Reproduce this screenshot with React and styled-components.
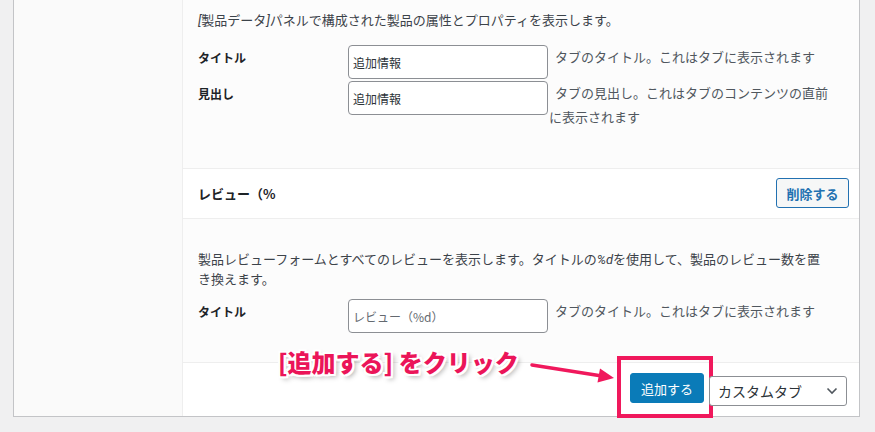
import React from "react";
import styled, { createGlobalStyle } from "styled-components";

const GlobalStyle = createGlobalStyle`
  html, body { margin: 0; padding: 0; }
  body {
    background: #f0f0f1;
    font-family: "Noto Sans CJK JP", "Noto Sans", sans-serif;
    color: #3c434a;
    -webkit-font-smoothing: antialiased;
  }
  * { box-sizing: border-box; }
`;

const Page = styled.div`
  width: 875px;
  height: 432px;
  overflow: hidden;
  padding-left: 13px;
`;

const Panel = styled.div`
  display: flex;
  width: 847px;
  border: 1px solid #c3c4c7;
  border-top: none;
  background: #fff;
`;

const Sidebar = styled.div`
  width: 169px;
  flex: none;
  background: #fafafa;
  border-right: 1px solid #eeeeee;
`;

const Main = styled.div`
  flex: 1;
  display: flex;
  flex-direction: column;
  min-width: 0;
`;

const Section = styled.div`
  background: #fcfcfc;
  border-bottom: 1px solid #eeeeee;
  padding: ${(p) => p.$pad} 27px ${(p) => p.$padBottom} 15px;
  height: ${(p) => p.$h}px;
`;

const Desc = styled.p`
  margin: 0 0 ${(p) => p.$mb}px;
  font-size: 13px;
  line-height: ${(p) => p.$lh}px;
  color: #3c434a;
`;

const Em = styled.em`
  font-style: italic;
  font-family: Roboto, "Noto Sans CJK JP", sans-serif;
  font-synthesis: none;
`;

const Row = styled.div`
  display: grid;
  grid-template-columns: 150px 1fr;
  align-items: start;
  margin-bottom: ${(p) => p.$mb || 0}px;
`;

const Label = styled.div`
  font-size: 12px;
  font-weight: 700;
  color: #1d2327;
  line-height: 20px;
  padding-top: 3px;
`;

const Field = styled.div`
  display: flex;
  align-items: flex-start;
`;

const TextInput = styled.input`
  width: 200px;
  height: 34px;
  flex: none;
  border: 1px solid #8c8f94;
  border-radius: 4px;
  background: #fff;
  padding: 0 4px;
  font-family: inherit;
  font-size: 12px;
  color: #2c3338;
  outline: none;
  &::placeholder { color: #646970; }
`;

const Help = styled.div`
  margin-left: 1px;
  font-size: 13px;
  line-height: 24px;
  text-indent: 6px;
  color: #50575e;
`;

const Header = styled.div`
  height: 50px;
  display: flex;
  align-items: center;
  justify-content: space-between;
  padding: 0 10px 1px 15px;
  background: #fff;
  border-bottom: 1px solid #eeeeee;
`;

const HeaderTitle = styled.h3`
  margin: 0;
  font-size: 13px;
  font-weight: 700;
  color: #1d2327;
`;

const SecondaryButton = styled.button`
  height: 30px;
  width: 73px;
  padding: 0;
  border: 1px solid #2271b1;
  border-radius: 3px;
  background: #f6f7f7;
  color: #2271b1;
  font-family: inherit;
  font-size: 13px;
  font-weight: 700;
  cursor: pointer;
`;

const Toolbar = styled.div`
  position: relative;
  height: 53px;
  display: flex;
  justify-content: flex-end;
  align-items: flex-start;
  gap: 5px;
  padding: 10px 12px 0 15px;
  background: #fff;
`;

const ButtonWrap = styled.span`
  position: relative;
  display: inline-flex;
`;

const PrimaryButton = styled.button`
  height: 30px;
  width: 74px;
  padding: 0;
  border: 1px solid #0a7bb8;
  border-radius: 3px;
  background: #0a7bb8;
  color: #fff;
  font-family: inherit;
  font-size: 13px;
  cursor: pointer;
`;

const Highlight = styled.span`
  position: absolute;
  left: -13px;
  top: -17px;
  width: 96px;
  height: 62px;
  border: 4px solid #f0185c;
  pointer-events: none;
`;

const SelectWrap = styled.span`
  position: relative;
  margin-top: 3px;
  display: inline-flex;
`;

const Select = styled.select`
  appearance: none;
  width: 138px;
  height: 30px;
  border: 1px solid #8c8f94;
  border-radius: 3px;
  background: #fff;
  padding: 0 24px 0 8px;
  font-family: inherit;
  font-size: 14px;
  color: #2c3338;
`;

const Chevron = styled.svg`
  position: absolute;
  right: 9px;
  top: 11px;
  pointer-events: none;
`;

const Callout = styled.div`
  position: absolute;
  left: 95px;
  top: -14px;
  font-size: 24px;
  line-height: 26px;
  font-weight: 900;
  color: #eb1559;
  white-space: nowrap;
  text-shadow:
    2px 0 0 #fff, -2px 0 0 #fff, 0 2px 0 #fff, 0 -2px 0 #fff,
    2px 2px 0 #fff, -2px -2px 0 #fff, 2px -2px 0 #fff, -2px 2px 0 #fff,
    3px 3px 5px rgba(0, 0, 0, 0.35);
`;

const Arrow = styled.svg`
  position: absolute;
  left: 345px;
  top: -4px;
  overflow: visible;
`;

export default function App() {
  return (
    <>
      <GlobalStyle />
      <Page>
        <Panel>
          <Sidebar />
          <Main>
            <Section $pad="10px" $padBottom="0" $h={169}>
              <Desc $lh={20} $mb={14}>
                <Em>[</Em>製品データ<Em>]</Em>パネルで構成された製品の属性とプロパティを表示します。
              </Desc>
              <Row $mb={2}>
                <Label>タイトル</Label>
                <Field>
                  <TextInput defaultValue="追加情報" />
                  <Help>タブのタイトル。これはタブに表示されます</Help>
                </Field>
              </Row>
              <Row>
                <Label>見出し</Label>
                <Field>
                  <TextInput defaultValue="追加情報" />
                  <Help>タブの見出し。これはタブのコンテンツの直前に表示されます</Help>
                </Field>
              </Row>
            </Section>
            <Header>
              <HeaderTitle>レビュー（%</HeaderTitle>
              <SecondaryButton>削除する</SecondaryButton>
            </Header>
            <Section $pad="30px" $padBottom="0" $h={144}>
              <Desc $lh={19} $mb={11}>
                製品レビューフォームとすべてのレビューを表示します。タイトルの<Em>%d</Em>を使用して、製品のレビュー数を置き換えます。
              </Desc>
              <Row>
                <Label>タイトル</Label>
                <Field>
                  <TextInput placeholder="レビュー（%d）" />
                  <Help>タブのタイトル。これはタブに表示されます</Help>
                </Field>
              </Row>
            </Section>
            <Toolbar>
              <Callout>[追加する] をクリック</Callout>
              <Arrow width="90" height="26" viewBox="0 0 90 26">
                <line x1="4" y1="6" x2="74" y2="17" stroke="#f0185c" strokeWidth="3.5" strokeLinecap="round" />
                <polygon points="86,19 69.5,23.5 72,9.5" fill="#f0185c" />
              </Arrow>
              <ButtonWrap>
                <PrimaryButton>追加する</PrimaryButton>
                <Highlight />
              </ButtonWrap>
              <SelectWrap>
                <Select defaultValue="custom">
                  <option value="custom">カスタムタブ</option>
                </Select>
                <Chevron width="12" height="8" viewBox="0 0 12 8">
                  <polyline points="1.5,1.5 6,6 10.5,1.5" fill="none" stroke="#50575e" strokeWidth="1.6" />
                </Chevron>
              </SelectWrap>
            </Toolbar>
          </Main>
        </Panel>
      </Page>
    </>
  );
}
